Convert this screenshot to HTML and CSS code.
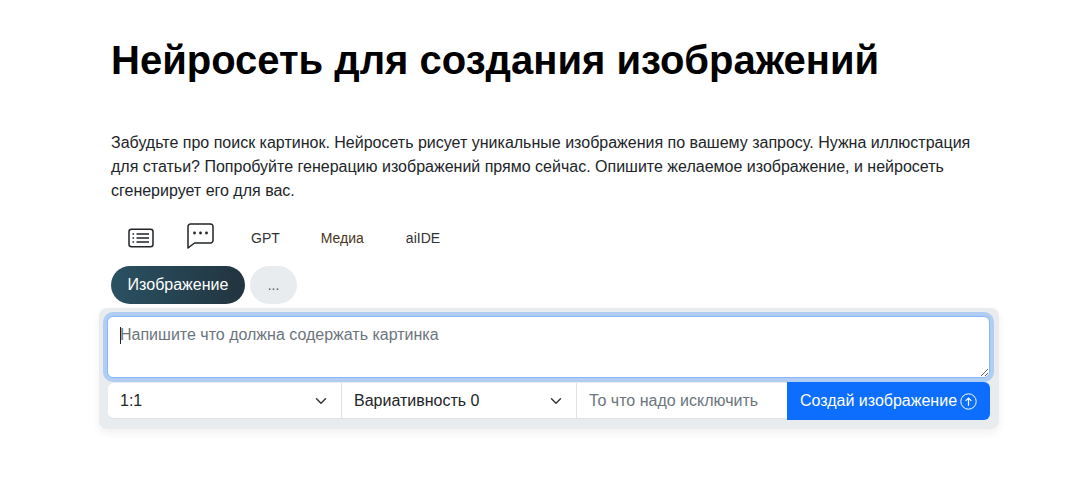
FILE: index.html
```html
<!DOCTYPE html>
<html lang="ru">
<head>
<meta charset="utf-8">
<title>Нейросеть для создания изображений</title>
<link rel="stylesheet" href="styles.css">
</head>
<body>
<main class="page">
  <h1 class="title">Нейросеть для создания изображений</h1>
  <p class="lead">Забудьте про поиск картинок. Нейросеть рисует уникальные изображения по вашему запросу. Нужна иллюстрация для статьи? Попробуйте генерацию изображений прямо сейчас. Опишите желаемое изображение, и нейросеть сгенерирует его для вас.</p>
  <nav class="tabs">
    <a class="tab tab-icon tab-list" href="#" aria-label="Список">
      <svg width="26" height="20" viewBox="0 0 26 20" fill="none" stroke="#212529" stroke-width="1.5"><rect x="1" y="1.2" width="24" height="17.6" rx="2.5"/><path d="M8.5 6h12.5M8.5 10h12.5M8.500 14h12.500" stroke-width="1.7"/><path d="M4.500 6h1.600M4.500 10h1.600M4.500 14h1.600" stroke-width="1.7"/></svg>
    </a>
    <a class="tab tab-icon tab-chat" href="#" aria-label="Чат">
      <svg width="27" height="26" viewBox="0 0 27 26" fill="none"><path d="M3.5 1h20A2.500 2.500 0 0 1 26 3.500v14a2.500 2.500 0 0 1-2.500 2.500H7.500L1 25V3.500A2.500 2.500 0 0 1 3.500 1z" stroke="#212529" stroke-width="1.500" stroke-linejoin="round"/><circle cx="7.500" cy="10" r="1.400" fill="#212529"/><circle cx="13.500" cy="10" r="1.400" fill="#212529"/><circle cx="19.500" cy="10" r="1.400" fill="#212529"/></svg>
    </a>
    <a class="tab tab-gpt" href="#">GPT</a>
    <a class="tab tab-media" href="#">Медиа</a>
    <a class="tab tab-ide" href="#">aiIDE</a>
  </nav>
  <div class="pills">
    <button class="pill pill-active" type="button">Изображение</button>
    <button class="pill pill-more" type="button">...</button>
  </div>
  <form class="panel">
    <div class="prompt-wrap">
      <textarea class="prompt" placeholder="Напишите что должна содержать картинка"></textarea>
      <span class="caret"></span>
    </div>
    <div class="controls">
      <select class="field select select-ratio"><option>1:1</option></select>
      <select class="field select select-var"><option>Вариативность 0</option></select>
      <input class="field negative" type="text" placeholder="То что надо исключить">
      <button class="submit" type="button">Создай изображение
        <svg width="17" height="17" viewBox="0 0 17 17" fill="none" stroke="#fff"><circle cx="8.500" cy="8.500" r="7.700" stroke-width="1"/><path d="M8.500 12.800V5M5.600 7.900l2.900-2.900 2.900 2.900" stroke-width="1.200"/></svg>
      </button>
    </div>
  </form>
</main>
</body>
</html>
```
FILE: styles.css
```css
* { box-sizing: border-box; }
html, body { margin: 0; background: #fff; }
body {
  font-family: "Liberation Sans", Arial, sans-serif;
  font-size: 16px;
  line-height: 24px;
  color: #212529;
}
.page {
  width: 1074px;
  height: 489px;
  padding: 36px 84px 0 111px;
  overflow: hidden;
}
.title {
  margin: 0 0 47px;
  font-size: 40px;
  line-height: 48px;
  font-weight: 700;
  color: #000;
}
.lead { margin: 0 0 14px; color: #212529; }
.tabs {
  display: flex;
  align-items: center;
  height: 40px;
  padding-top: 1px;
  margin-bottom: 9px;
}
.tab {
  display: flex;
  align-items: center;
  color: #333;
  font-size: 14px;
  text-decoration: none;
}
.tab-list { margin-left: 17px; }
.tab-chat { margin-left: 33px; padding-bottom: 4px; }
.tab-gpt { margin-left: 37px; }
.tab-media { margin-left: 41px; color: #4a3620; }
.tab-ide { margin-left: 42px; }
.pills { display: flex; gap: 5px; margin-bottom: 4px; }
.pill {
  height: 38px;
  border: 0;
  border-radius: 19px;
  font-family: inherit;
  font-size: 16px;
}
.pill-active {
  width: 134px;
  color: #fff;
  background: linear-gradient(90deg, #2a5163, #22343f);
}
.pill-more {
  width: 47px;
  background: #e9ecef;
  color: #555;
  font-size: 14px;
}
.panel {
  width: 900px;
  margin-left: -12px;
  padding: 8px 8px 9px;
  background: #e9ecef;
  border-radius: 8px;
  box-shadow: 0 4px 8px rgba(0, 0, 0, 0.06);
}
.prompt-wrap { position: relative; width: 883px; }
.prompt {
  display: block;
  width: 883px;
  height: 62px;
  padding: 6px 12px;
  border: 1px solid #86b7fe;
  border-radius: 6px;
  box-shadow: 0 0 0 4px rgba(13, 110, 253, 0.25);
  outline: 0;
  font: inherit;
  color: #212529;
  background: #fff;
}
.caret {
  position: absolute;
  left: 13px;
  top: 11px;
  width: 1px;
  height: 17px;
  background: #212529;
}
.prompt::placeholder, .negative::placeholder { color: #6c757d; opacity: 1; }
.controls {
  display: flex;
  align-items: center;
  width: 882px;
  height: 38px;
  margin: 4px 0 0 1px;
}
.field {
  height: 36px;
  border: 0;
  border-bottom: 1px solid #dee2e6;
  background-color: #fff;
  font: inherit;
  color: #212529;
  outline: 0;
}
.select {
  appearance: none;
  padding: 0 36px 0 12px;
  border-right: 1px solid #dee2e6;
  background-image: url("data:image/svg+xml,%3csvg xmlns='http://www.w3.org/2000/svg' viewBox='0 0 16 16'%3e%3cpath fill='none' stroke='%23343a40' stroke-linecap='round' stroke-linejoin='round' stroke-width='2' d='m2 5 6 6 6-6'/%3e%3c/svg%3e");
  background-repeat: no-repeat;
  background-position: right 12px center;
  background-size: 16px 12px;
}
.select-ratio { width: 234px; border-radius: 6px 0 0 6px; }
.select-var { width: 235px; }
.negative { width: 210px; padding: 0 12px; }
.submit {
  display: flex;
  align-items: center;
  justify-content: center;
  gap: 3px;
  flex: 1;
  height: 38px;
  padding: 0;
  border: 0;
  border-radius: 0 6px 6px 0;
  background: #0d6efd;
  color: #fff;
  font: inherit;
}
```
